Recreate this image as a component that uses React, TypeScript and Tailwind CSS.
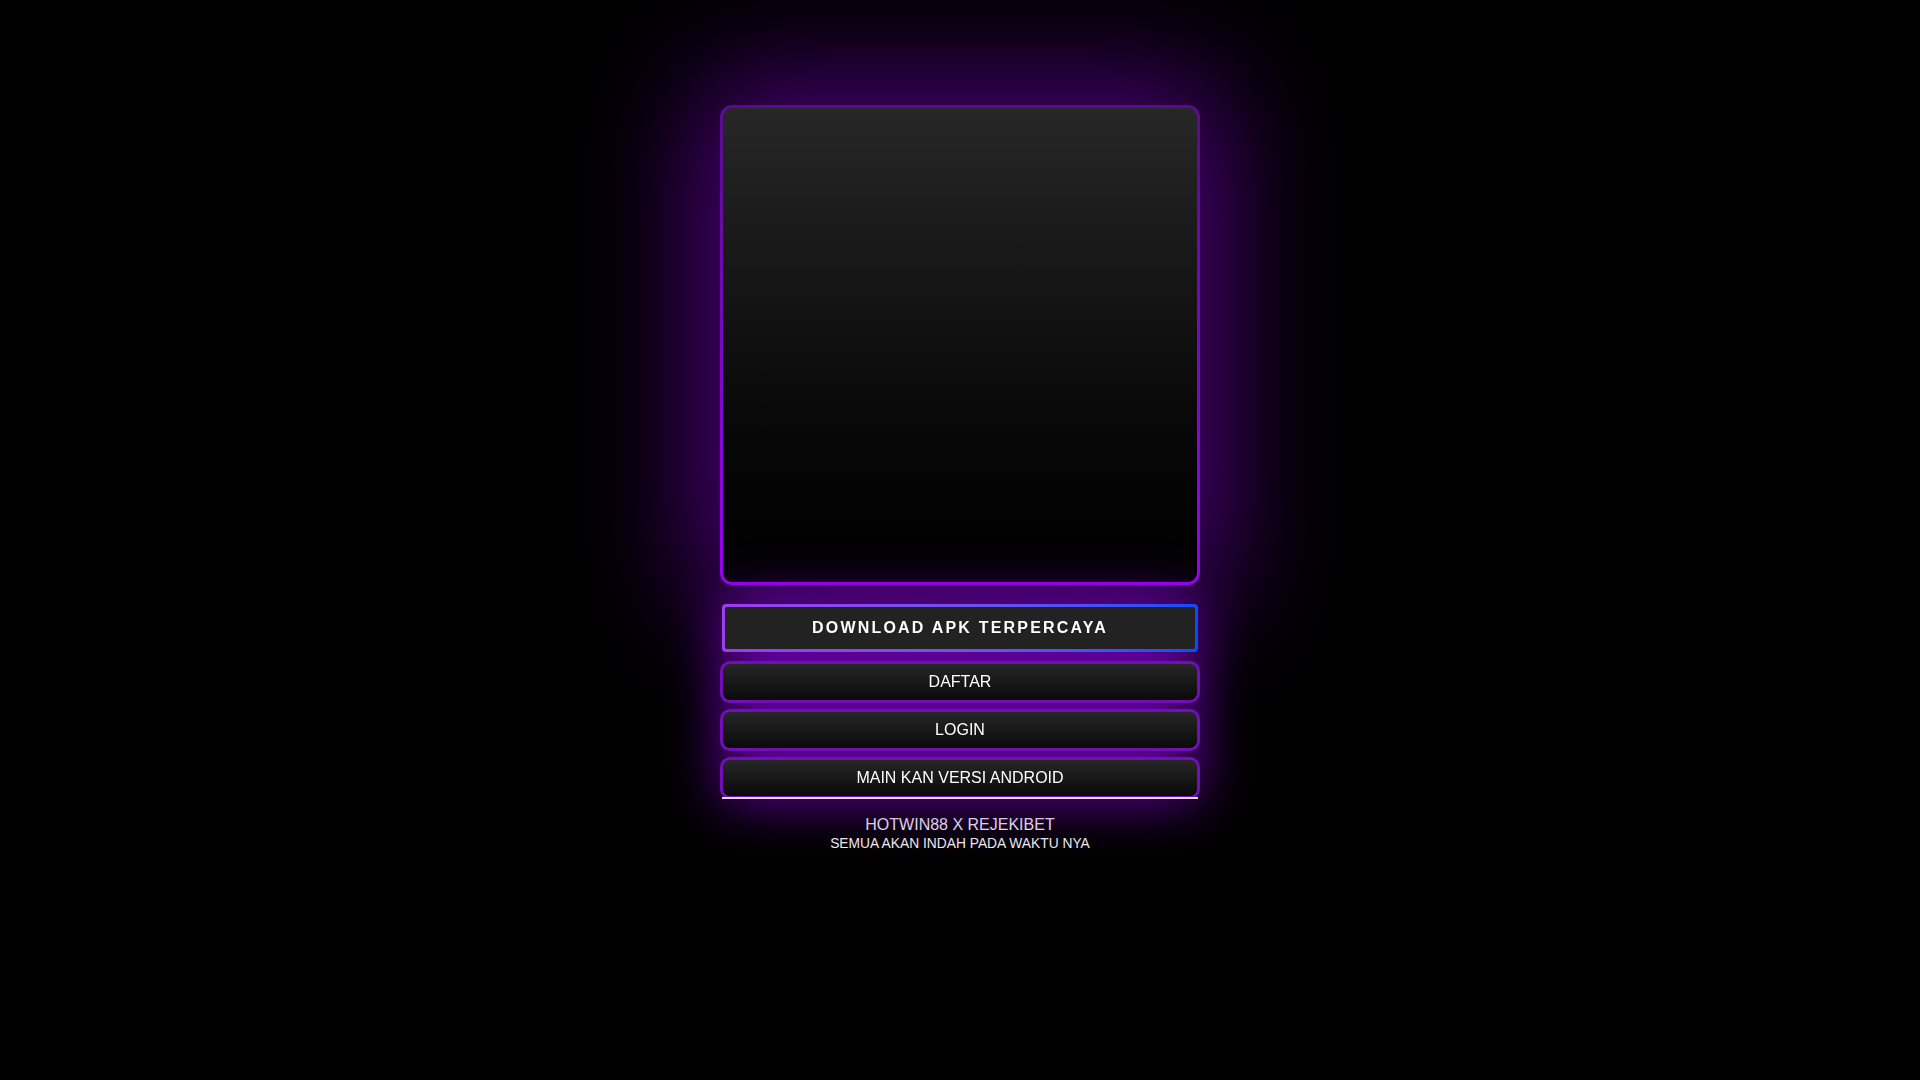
import React from "react"

const links = ["DAFTAR", "LOGIN", "MAIN KAN VERSI ANDROID"]

export default function App() {
  return (
    <div className="min-h-screen w-full bg-black flex flex-col items-center pt-[105px] font-['Liberation_Sans',Arial,sans-serif] text-white">
      <div className="w-[480px] flex flex-col">
        {/* banner box */}
        <div className="h-[480px] rounded-[12px] p-[3px] bg-gradient-to-b from-[#560c8c] to-[#9c00f2] shadow-[0_0_120px_25px_rgba(125,0,200,0.6)]">
          <div className="w-full h-full rounded-[9px] bg-gradient-to-b from-[#272727] to-[#010101]" />
        </div>

        {/* buttons, glow painted under them */}
        <div className="flex flex-col drop-shadow-[0_0_28px_rgba(125,0,200,0.85)]">
          <div className="mt-[19px] mx-[2px] h-[48px] p-[3px] rounded-[4px] bg-gradient-to-r from-[#9b3cf0] via-[#6f52ee] to-[#0a4bff]">
            <button className="w-full h-full rounded-[2px] bg-[#222222] text-[16px] font-bold tracking-[2.2px] text-white">
              DOWNLOAD APK TERPERCAYA
            </button>
          </div>

          <div className="mt-[9px] flex flex-col gap-[6px]">
            {links.map((l, i) => (
              <div key={l} className="flex flex-col">
                <button className="h-[42px] rounded-[10px] border-[3px] border-[#7010b4] bg-gradient-to-b from-[#272727] to-[#0a0a0a] text-[16px] text-white">
                  {l}
                </button>
                {i === links.length - 1 && <div className="-mt-[2px] mx-[2px] h-[2px] bg-[#e2dae8]" />}
              </div>
            ))}
          </div>
        </div>

        {/* footer */}
        <div className="mt-[18px] flex flex-col items-center leading-none">
          <div className="text-[16px] text-[#f2f2f2]">HOTWIN88 X REJEKIBET</div>
          <div className="mt-[4px] text-[13.8px] text-[#f2f2f2]">SEMUA AKAN INDAH PADA WAKTU NYA</div>
        </div>
      </div>
    </div>
  )
}
